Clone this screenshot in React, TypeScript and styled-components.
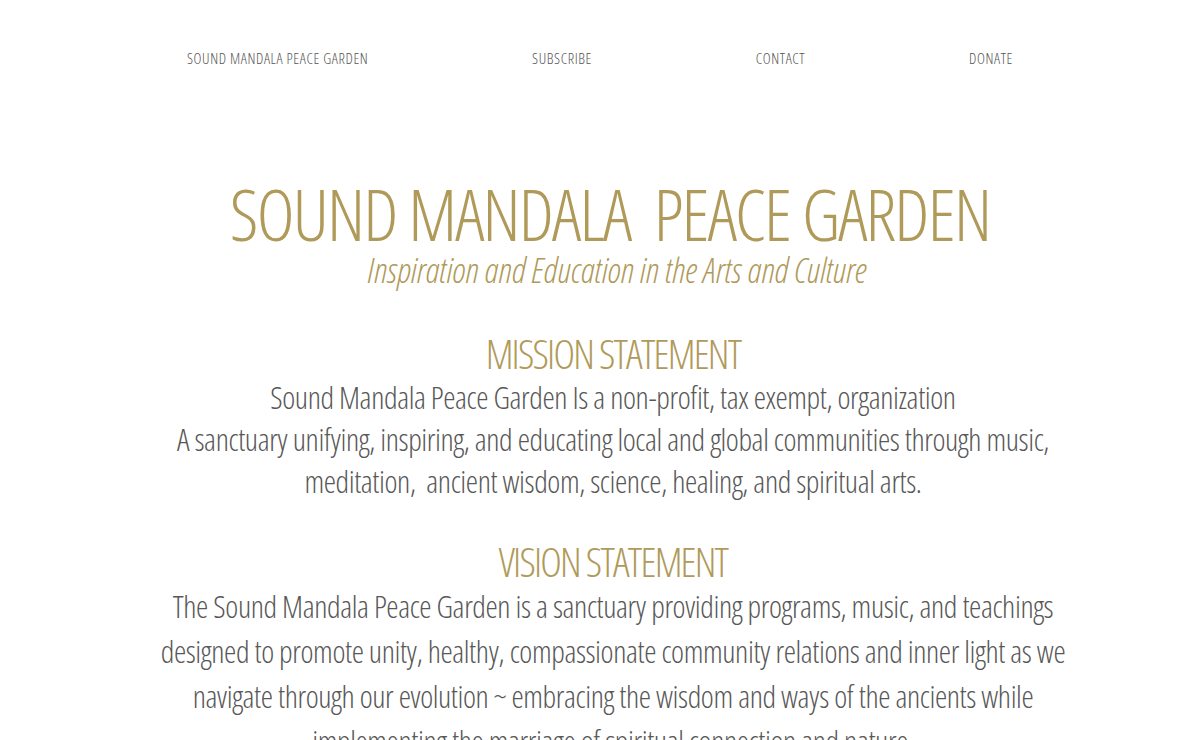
import styled, { createGlobalStyle } from "styled-components";

const Global = createGlobalStyle`
  html, body { margin: 0; background: #fff; }
  body {
    font-family: "Open Sans", "Liberation Sans", sans-serif;
    font-stretch: condensed;
    font-weight: 300;
    color: #555;
  }
`;

const Page = styled.div`
  width: 1200px;
  display: flex;
  flex-direction: column;
  align-items: center;
`;

const Nav = styled.nav`
  width: 826px;
  display: flex;
  justify-content: space-between;
  padding-top: 48px;
`;

const NavLink = styled.a`
  font-size: 15px;
  line-height: 20px;
  color: #555;
  text-decoration: none;
  letter-spacing: 0.6px;
  font-weight: 300;
`;

const Content = styled.main`
  width: 100%;
  box-sizing: border-box;
  padding-left: 26px;
  display: flex;
  flex-direction: column;
  align-items: center;
`;

const Hero = styled.header`
  margin-top: 109px;
  display: flex;
  flex-direction: column;
  align-items: center;
`;

const Title = styled.h1`
  margin: 0 0 0 -6px;
  font-size: 72px;
  line-height: 72px;
  font-weight: 300;
  letter-spacing: -1.8px;
  color: #b09a5a;
  white-space: pre;
`;

const Tagline = styled.p`
  margin: 1px 0 0 9px;
  font-size: 35px;
  line-height: 40px;
  font-style: italic;
  font-weight: 300;
  color: #b09a5a;
`;

const Section = styled.section<{ $gap: number }>`
  margin-top: ${(p) => p.$gap}px;
  display: flex;
  flex-direction: column;
  align-items: center;
  gap: 1px;
  text-align: center;
`;

const Heading = styled.h2`
  margin: 0;
  font-size: 41px;
  line-height: 44px;
  font-weight: 300;
  letter-spacing: -1.8px;
  color: #b09a5a;
`;

const Body = styled.p<{ $lh: number }>`
  margin: 0;
  font-size: 31px;
  line-height: ${(p) => p.$lh}px;
  font-weight: 300;
  letter-spacing: -0.4px;
  color: #585858;
  white-space: pre;
`;

export default function App() {
  return (
    <>
      <Global />
      <Page>
        <Nav>
          <NavLink href="#">SOUND MANDALA PEACE GARDEN</NavLink>
          <NavLink href="#">SUBSCRIBE</NavLink>
          <NavLink href="#">CONTACT</NavLink>
          <NavLink href="#">DONATE</NavLink>
        </Nav>

        <Content>
          <Hero>
            <Title>{"SOUND MANDALA  PEACE GARDEN"}</Title>
            <Tagline>Inspiration and Education in the Arts and Culture</Tagline>
          </Hero>

          <Section $gap={41}>
            <Heading>MISSION STATEMENT</Heading>
            <Body $lh={42}>
              {"Sound Mandala Peace Garden Is a non-profit, tax exempt, organization\n" +
                "A sanctuary unifying, inspiring, and educating local and global communities through music,\n" +
                "meditation,  ancient wisdom, science, healing, and spiritual arts."}
            </Body>
          </Section>

          <Section $gap={37}>
            <Heading>VISION STATEMENT</Heading>
            <Body $lh={45}>
              {"The Sound Mandala Peace Garden is a sanctuary providing programs, music, and teachings\n" +
                "designed to promote unity, healthy, compassionate community relations and inner light as we\n" +
                "navigate through our evolution ~ embracing the wisdom and ways of the ancients while\n" +
                "implementing the marriage of spiritual connection and nature."}
            </Body>
          </Section>
        </Content>
      </Page>
    </>
  );
}
